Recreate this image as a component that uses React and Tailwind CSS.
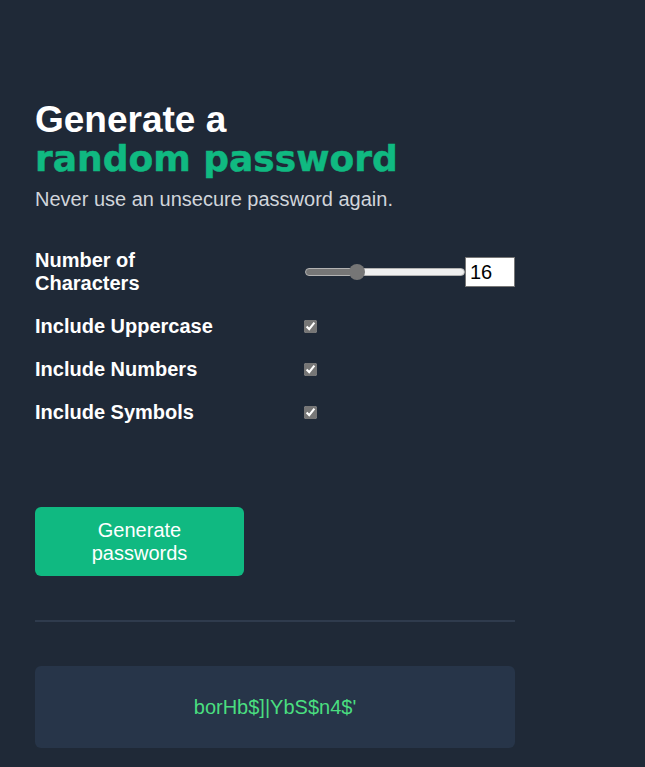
import React, { useState } from "react";

export default function App() {
  const [len, setLen] = useState(16);
  const min = 4;
  const max = 44;
  const pct = ((len - min) / (max - min)) * 100;
  return (
    <div className="min-h-[767px] w-full bg-[#1f2937] font-['Liberation_Sans',Arial,sans-serif] text-white">
      <div className="w-[480px] ml-[35px] pt-[101px]">
        <h1 className="font-bold">
          <span className="block text-[37px] leading-[38.5px]">Generate a</span>
          <span className="block font-['DejaVu_Sans',sans-serif] text-[36px] leading-[38.5px] text-[#10b981] [-webkit-text-stroke:0.5px_#10b981]">
            random password
          </span>
        </h1>
        <p className="mt-[10px] text-[20px] leading-[23px] text-[#d1d5db]">
          Never use an unsecure password again.
        </p>

        <div className="mt-[38px] grid grid-cols-[269px_1fr] gap-y-5 items-center text-[20px] leading-[23px] font-bold">
          <label className="w-[140px]">Number of Characters</label>
          <div className="flex items-center">
            <input
              type="range"
              min={min}
              max={max}
              value={len}
              onChange={(e) => setLen(Number(e.target.value))}
              style={{
                background: `linear-gradient(to right, #767676 0%, #767676 ${pct}%, #efefef ${pct}%, #efefef 100%)`,
              }}
              className="ml-[1px] w-[160px] h-[8px] rounded-full appearance-none border border-[#b2b2b2] [&::-webkit-slider-thumb]:appearance-none [&::-webkit-slider-thumb]:w-[16px] [&::-webkit-slider-thumb]:h-[16px] [&::-webkit-slider-thumb]:rounded-full [&::-webkit-slider-thumb]:bg-[#767676]"
            />
            <input
              type="number"
              value={len}
              onChange={(e) => setLen(Number(e.target.value))}
              className="w-[50px] h-[30px] bg-white text-black font-normal text-[20px] leading-[23px] pl-[4px] border border-[#767676] outline-none"
            />
          </div>

          <label>Include Uppercase</label>
          <div className="flex">
            <input type="checkbox" defaultChecked className="w-[13px] h-[13px] accent-[#767676]" />
          </div>

          <label>Include Numbers</label>
          <div className="flex">
            <input type="checkbox" defaultChecked className="w-[13px] h-[13px] accent-[#767676]" />
          </div>

          <label>Include Symbols</label>
          <div className="flex">
            <input type="checkbox" defaultChecked className="w-[13px] h-[13px] accent-[#767676]" />
          </div>
        </div>

        <button className="mt-[83px] block w-[209px] py-[11.5px] rounded-md bg-[#10b981] text-white text-[20px] leading-[23px] text-center">
          Generate
          <br />
          passwords
        </button>

        <div className="mt-[44px] h-[2px] bg-[#2f3b4d]" />

        <div className="mt-[44px] h-[82px] rounded-md bg-[#273549] flex items-center justify-center text-[20px] leading-[23px] text-[#4ade80]">
          borHb$]|YbS$n4$'
        </div>
      </div>
    </div>
  );
}
